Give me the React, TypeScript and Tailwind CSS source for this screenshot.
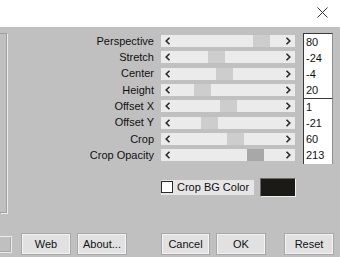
import React from "react";

const rows = [
  { label: "Perspective", pos: 92 },
  { label: "Stretch", pos: 47 },
  { label: "Center", pos: 55 },
  { label: "Height", pos: 33 },
  { label: "Offset X", pos: 59 },
  { label: "Offset Y", pos: 40 },
  { label: "Crop", pos: 66 },
  { label: "Crop Opacity", pos: 86, active: true },
];

const valuesA = ["80", "-24", "-4", "20"];
const valuesB = ["1", "-21", "60", "213"];

function Left() {
  return (
    <svg width="6" height="8" viewBox="0 0 6 8" className="shrink-0">
      <path d="M4.5 0.8 L1.2 4 L4.5 7.2" stroke="#2a2a2a" strokeWidth="1.6" fill="none" />
    </svg>
  );
}
function Right() {
  return (
    <svg width="6" height="8" viewBox="0 0 6 8" className="shrink-0">
      <path d="M1.5 0.8 L4.8 4 L1.5 7.2" stroke="#2a2a2a" strokeWidth="1.6" fill="none" />
    </svg>
  );
}

function ValueBox({ values }: { values: string[] }) {
  return (
    <div className="w-[30px] h-[65.33px] bg-white border-l border-t border-[#3a3a3a] border-r border-r-[#909090] flex flex-col">
      {values.map((v) => (
        <div key={v} className="h-[16.33px] flex items-center pl-[2px] text-[11px] leading-none text-[#111]">
          {v}
        </div>
      ))}
    </div>
  );
}

function Btn({ children, w, ml }: { children: React.ReactNode; w: string; ml: string }) {
  return (
    <div
      className={`${w} ${ml} h-[22px] bg-[#e1e1e1] border border-[#a8a8a8] shadow-[inset_1px_1px_0_#f4f4f4,inset_-1px_-1px_0_#f4f4f4] flex items-center justify-center text-[11px] text-[#111]`}
    >
      {children}
    </div>
  );
}

export default function App() {
  return (
    <div className="w-[340px] h-[257px] overflow-hidden bg-[#c0c0c0] flex flex-col font-['Liberation_Sans',Arial,sans-serif]">
      <div className="h-[27px] shrink-0 bg-white flex justify-end items-start pt-[7px] pr-[12px]">
        <svg width="11" height="11" viewBox="0 0 11 11">
          <path d="M0.5 0.5 L10.5 10.5 M10.5 0.5 L0.5 10.5" stroke="#333" strokeWidth="1" />
        </svg>
      </div>

      <div className="flex h-[186px] shrink-0">
        <div className="w-[7px] mt-[6px] h-[180px] border-t border-r border-b border-[#a0a0a0] shadow-[1px_1px_0_#ececec]" />
        <div className="flex flex-col">
          <div className="flex mt-[6px]">
            <div className="flex flex-col">
              {rows.map((r) => (
                <div key={r.label} className="h-[16.33px] flex items-center">
                  <div className="w-[148px] text-right pr-[1px] text-[11px] leading-none text-[#111]">{r.label}</div>
                  <div className="ml-[6px] w-[134px] h-[12px] bg-[#ebebeb] relative flex items-center justify-between px-[4px]">
                    <div
                      className={`absolute top-0 h-[12px] w-[17px] ${r.active ? "bg-[#a8a8a8]" : "bg-[#cdcdcd]"}`}
                      style={{ left: r.pos }}
                    />
                    <Left />
                    <Right />
                  </div>
                </div>
              ))}
            </div>
            <div className="ml-[8px] flex flex-col">
              <ValueBox values={valuesA} />
              <ValueBox values={valuesB} />
            </div>
          </div>

          <div className="flex items-center mt-[14px] ml-[154px] h-[19px]">
            <div className="w-[93px] h-[15px] bg-[#e6e6e6] flex items-center">
              <div className="w-[12px] h-[12px] bg-white border border-[#2a2a2a]" />
              <span className="ml-[4px] text-[11px] leading-none text-[#111]">Crop BG Color</span>
            </div>
            <div className="ml-[6px] w-[36px] h-[19px] bg-[#1c1a17] border border-[#6a6a6a] border-r-[#f0f0f0] border-b-[#f0f0f0]" />
          </div>
        </div>
      </div>

      <div className="flex items-start mt-[20px]">
        <div className="w-[12px] h-[17px] mt-[3px] border-t border-r border-b border-[#ececec] shadow-[inset_-1px_-1px_0_#a8a8a8]" />
        <Btn w="w-[50px]" ml="ml-[9px]">Web</Btn>
        <Btn w="w-[50px]" ml="ml-[6px]">About...</Btn>
        <Btn w="w-[49px]" ml="ml-[34px]">Cancel</Btn>
        <Btn w="w-[50px]" ml="ml-[6px]">OK</Btn>
        <Btn w="w-[50px]" ml="ml-[18px]">Reset</Btn>
      </div>
    </div>
  );
}
